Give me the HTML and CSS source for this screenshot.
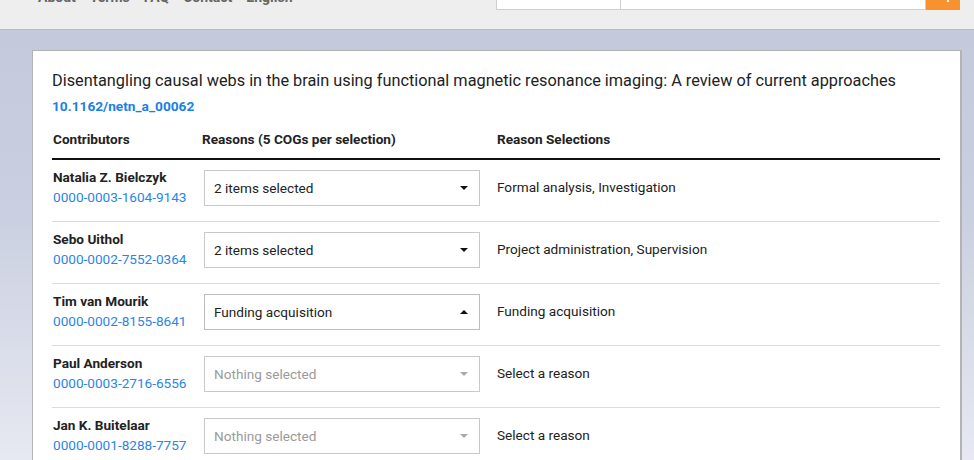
FILE: index.html
```html
<!DOCTYPE html>
<html lang="en">
<head>
<meta charset="utf-8">
<title>Contributor reasons</title>
<link rel="stylesheet" href="styles.css">
</head>
<body>
<header class="topbar">
  <nav class="nav">
    <a href="#">About</a>
    <a href="#">Terms</a>
    <a href="#">FAQ</a>
    <a href="#">Contact</a>
    <a href="#">English</a>
  </nav>
  <form class="search">
    <div class="search-scope"></div>
    <div class="search-input"></div>
    <button class="search-btn" type="button"><span class="search-icon"></span></button>
  </form>
</header>
<main class="page">
  <section class="card">
    <h1 class="title">Disentangling causal webs in the brain using functional magnetic resonance imaging: A review of current approaches</h1>
    <a class="doi" href="#">10.1162/netn_a_00062</a>
    <div class="table">
      <div class="row head">
        <div class="c1">Contributors</div>
        <div class="c2">Reasons (5 COGs per selection)</div>
        <div class="c3">Reason Selections</div>
      </div>
      <div class="row">
        <div class="c1"><div class="name">Natalia Z. Bielczyk</div><a class="orcid" href="#">0000-0003-1604-9143</a></div>
        <div class="c2"><div class="select"><span>2 items selected</span><i class="caret"></i></div></div>
        <div class="c3 reason">Formal analysis, Investigation</div>
      </div>
      <div class="row">
        <div class="c1"><div class="name">Sebo Uithol</div><a class="orcid" href="#">0000-0002-7552-0364</a></div>
        <div class="c2"><div class="select"><span>2 items selected</span><i class="caret"></i></div></div>
        <div class="c3 reason">Project administration, Supervision</div>
      </div>
      <div class="row">
        <div class="c1"><div class="name">Tim van Mourik</div><a class="orcid" href="#">0000-0002-8155-8641</a></div>
        <div class="c2"><div class="select open"><span>Funding acquisition</span><i class="caret up"></i></div></div>
        <div class="c3 reason">Funding acquisition</div>
      </div>
      <div class="row">
        <div class="c1"><div class="name">Paul Anderson</div><a class="orcid" href="#">0000-0003-2716-6556</a></div>
        <div class="c2"><div class="select empty"><span>Nothing selected</span><i class="caret"></i></div></div>
        <div class="c3 reason">Select a reason</div>
      </div>
      <div class="row">
        <div class="c1"><div class="name">Jan K. Buitelaar</div><a class="orcid" href="#">0000-0001-8288-7757</a></div>
        <div class="c2"><div class="select empty"><span>Nothing selected</span><i class="caret"></i></div></div>
        <div class="c3 reason">Select a reason</div>
      </div>
    </div>
  </section>
</main>
</body>
</html>
```
FILE: styles.css
```css
html, body {
  margin: 0;
  padding: 0;
  height: 100%;
  overflow: hidden;
}
body {
  font-family: Roboto, "Liberation Sans", Arial, sans-serif;
  color: #222;
  background: #e9ecf3;
}
a { text-decoration: none; }

.topbar {
  height: 29px;
  background: #eeeeee;
  border-bottom: 1px solid #b9b9b9;
  display: flex;
  align-items: flex-start;
  overflow: hidden;
}
.nav {
  display: flex;
  gap: 14px;
  margin-left: 38px;
  margin-top: -11px;
  font-size: 14px;
  font-weight: bold;
  line-height: 16px;
}
.nav a { color: #666; }

.search {
  display: flex;
  margin-left: auto;
  margin-right: 14px;
  margin-top: -20px;
  height: 30px;
}
.search-scope {
  width: 123px;
  background: #fff;
  border: 1px solid #cfcfcf;
}
.search-input {
  width: 304px;
  background: #fff;
  border: 1px solid #cfcfcf;
  border-left: 0;
}
.search-btn {
  width: 34px;
  padding: 0;
  border: 0;
  background: #f7922e;
  position: relative;
}
.search-icon {
  position: absolute;
  left: 21px;
  top: 18px;
  width: 2px;
  height: 4px;
  background: #fff;
}

.page {
  height: 430px;
  background: linear-gradient(180deg, #c4c9dc 0%, #c9cee0 40%, #e6e9f1 100%);
  padding: 20px 12px 0 32px;
  box-sizing: border-box;
}
.card {
  background: #fff;
  border: 1px solid #b3b3b3;
  border-right: 2px solid #b3b3b3;
  border-bottom: 0;
  height: 420px;
  padding: 20px 20px 0 19px;
  box-sizing: border-box;
}
.title {
  margin: 0;
  font-size: 16.3px;
  font-weight: normal;
  line-height: 20px;
  color: #222;
}
.doi {
  display: block;
  margin-top: 5px;
  font-size: 13.7px;
  font-weight: bold;
  line-height: 20px;
  color: #1a7fe6;
}

.table {
  margin-top: 3px;
}
.row {
  display: grid;
  grid-template-columns: 150px 295px 1fr;
  border-bottom: 1px solid #dcdcdc;
  height: 62px;
  box-sizing: border-box;
  padding-top: 8px;
  font-size: 13.6px;
}
.row.head {
  height: 41px;
  border-bottom: 2px solid #111;
  padding-top: 10px;
  font-weight: bold;
  line-height: 20px;
}
.row.head .c1 { padding-left: 1px; }
.name {
  font-weight: bold;
  line-height: 19px;
  padding-left: 1px;
}
.orcid {
  display: block;
  line-height: 20px;
  color: #2a85e8;
  padding-left: 1px;
}
.select {
  margin-top: 2px;
  margin-left: 2px;
  width: 276px;
  height: 36px;
  box-sizing: border-box;
  border: 1px solid #c9c9c9;
  display: flex;
  align-items: center;
  padding: 0 11px 0 9px;
  color: #222;
}
.select.open { border-color: #bdbdbd; }
.select span { flex: 1; }
.select.empty { color: #9a9a9a; }
.caret {
  width: 0;
  height: 0;
  border-left: 4px solid transparent;
  border-right: 4px solid transparent;
  border-top: 4px solid #111;
}
.caret.up {
  border-top: 0;
  border-bottom: 4px solid #111;
}
.select.empty .caret { border-top-color: #aaa; }
.reason {
  line-height: 20px;
  padding-top: 9px;
  color: #222;
}
```
